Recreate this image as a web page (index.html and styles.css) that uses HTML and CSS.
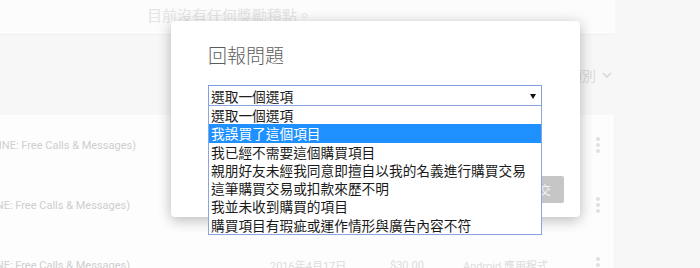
FILE: index.html
```html
<!DOCTYPE html>
<html>
	<head>
		<meta charset="utf-8">
		<title>回報問題</title>
		<link rel="stylesheet" href="styles.css">
	</head>
	<body>
		<div class="page">
			<div class="notice">目前沒有任何獎勵積點。</div>
			<div class="toolbar">
				<span class="filter">所有類別</span>
				<svg class="chevron" width="10" height="6" viewBox="0 0 10 6"><path d="M1 1l4 4 4-4" fill="none" stroke="#d6d6d6" stroke-width="1.6"/></svg>
			</div>
			<ul class="list">
				<li class="row">
					<div class="name"><span>LINE (LINE: Free Calls &amp; Messages)</span></div>
					<div class="date">2016年4月17日</div>
					<div class="price">$30.00</div>
					<div class="type">Android 應用程式</div>
					<div class="more"><i></i><i></i><i></i></div>
				</li>
				<li class="row">
					<div class="name short"><span>LINE (LINE: Free Calls &amp; Messages)</span></div>
					<div class="date">2016年4月17日</div>
					<div class="price">$30.00</div>
					<div class="type">Android 應用程式</div>
					<div class="more"><i></i><i></i><i></i></div>
				</li>
				<li class="row">
					<div class="name short"><span>LINE (LINE: Free Calls &amp; Messages)</span></div>
					<div class="date">2016年4月17日</div>
					<div class="price">$30.00</div>
					<div class="type">Android 應用程式</div>
					<div class="more"><i></i><i></i><i></i></div>
				</li>
			</ul>
		</div>

		<div class="dialog">
			<h2 class="title">回報問題</h2>
			<div class="select">
				<span>選取一個選項</span>
				<span class="arrow"></span>
				<ul class="options">
					<li>選取一個選項</li>
					<li class="active">我誤買了這個項目</li>
					<li>我已經不需要這個購買項目</li>
					<li>親朋好友未經我同意即擅自以我的名義進行購買交易</li>
					<li>這筆購買交易或扣款來歷不明</li>
					<li>我並未收到購買的項目</li>
					<li>購買項目有瑕疵或運作情形與廣告內容不符</li>
				</ul>
			</div>
			<div class="actions">
				<button class="submit">提交</button>
			</div>
		</div>
	</body>
</html>
```

FILE: styles.css
```css
*{
	margin:0;
	padding:0;
	box-sizing:border-box;
}
ul{
	list-style:none;
}
body{
	background-color:#f7f7f7;
	font-family:Roboto, "Noto Sans CJK TC", sans-serif;
	overflow:hidden;
}
.page{
	width:615px;
}
.notice{
	height:35px;
	line-height:33px;
	padding-left:147px;
	background-color:#fcfcfc;
	border-bottom:1px solid #f1f1f1;
	font-size:15px;
	color:#e4e4e4;
}
.toolbar{
	height:80px;
	display:flex;
	justify-content:flex-end;
	align-items:center;
	gap:6px;
	padding-right:3px;
}
.toolbar .filter{
	font-size:14px;
	color:#dadada;
}
.list{
	background-color:#fdfdfd;
	border-right:1px solid #f3f3f3;
}
.row{
	height:60px;
	display:grid;
	grid-template-columns:137px 253px 73px 1fr 32px;
	align-items:center;
	font-size:11px;
	color:#cecece;
	white-space:nowrap;
}
.row .name{
	display:flex;
	justify-content:flex-end;
	overflow:hidden;
	padding-right:1px;
}
.row .name.short{
	padding-right:7px;
}
.row .date{
	padding-left:133px;
	color:#dcdcdc;
}
.row .price,.row .type{
	color:#dcdcdc;
}
.row .more{
	display:flex;
	flex-direction:column;
	align-items:center;
	gap:2px;
}
.row .more i{
	width:4px;
	height:4px;
	border-radius:50%;
	background-color:#e0e0e0;
}

.dialog{
	position:absolute;
	left:171px;
	top:21px;
	width:409px;
	height:196px;
	background-color:#fff;
	border-radius:4px;
	box-shadow:0 3px 14px rgba(0,0,0,0.28);
	padding:21px 38px 14px 37px;
	display:flex;
	flex-direction:column;
}
.dialog .title{
	font-size:19px;
	line-height:26px;
	font-weight:300;
	color:#5c5c5c;
	font-family:"Noto Sans CJK TC", sans-serif;
}
.select{
	position:relative;
	margin-top:17px;
	height:21px;
	border:1px solid #7fa0e0;
	display:flex;
	align-items:center;
	padding-left:2px;
	font-family:"Noto Sans CJK TC", sans-serif;
	font-size:13.7px;
	color:#222;
}
.select .arrow{
	position:absolute;
	right:5px;
	top:8px;
	border-left:3px solid transparent;
	border-right:3px solid transparent;
	border-top:5px solid #111;
}
.options{
	position:absolute;
	left:-1px;
	right:-1px;
	top:19px;
	border:1px solid #8aa6df;
	background-color:#fff;
	z-index:2;
}
.options li{
	height:18.3px;
	line-height:18.3px;
	padding-left:2px;
	white-space:nowrap;
	color:#1a1a1a;
}
.options li.active{
	background-color:#1e90ff;
	color:#fff;
}
.actions{
	margin-top:auto;
	display:flex;
	justify-content:flex-end;
	margin-right:-22px;
}
.submit{
	height:27px;
	padding:0 13px;
	border:none;
	border-radius:2px;
	background-color:#c6c6c6;
	color:#f2f2f2;
	font-family:"Noto Sans CJK TC", sans-serif;
	font-size:12px;
}
```
